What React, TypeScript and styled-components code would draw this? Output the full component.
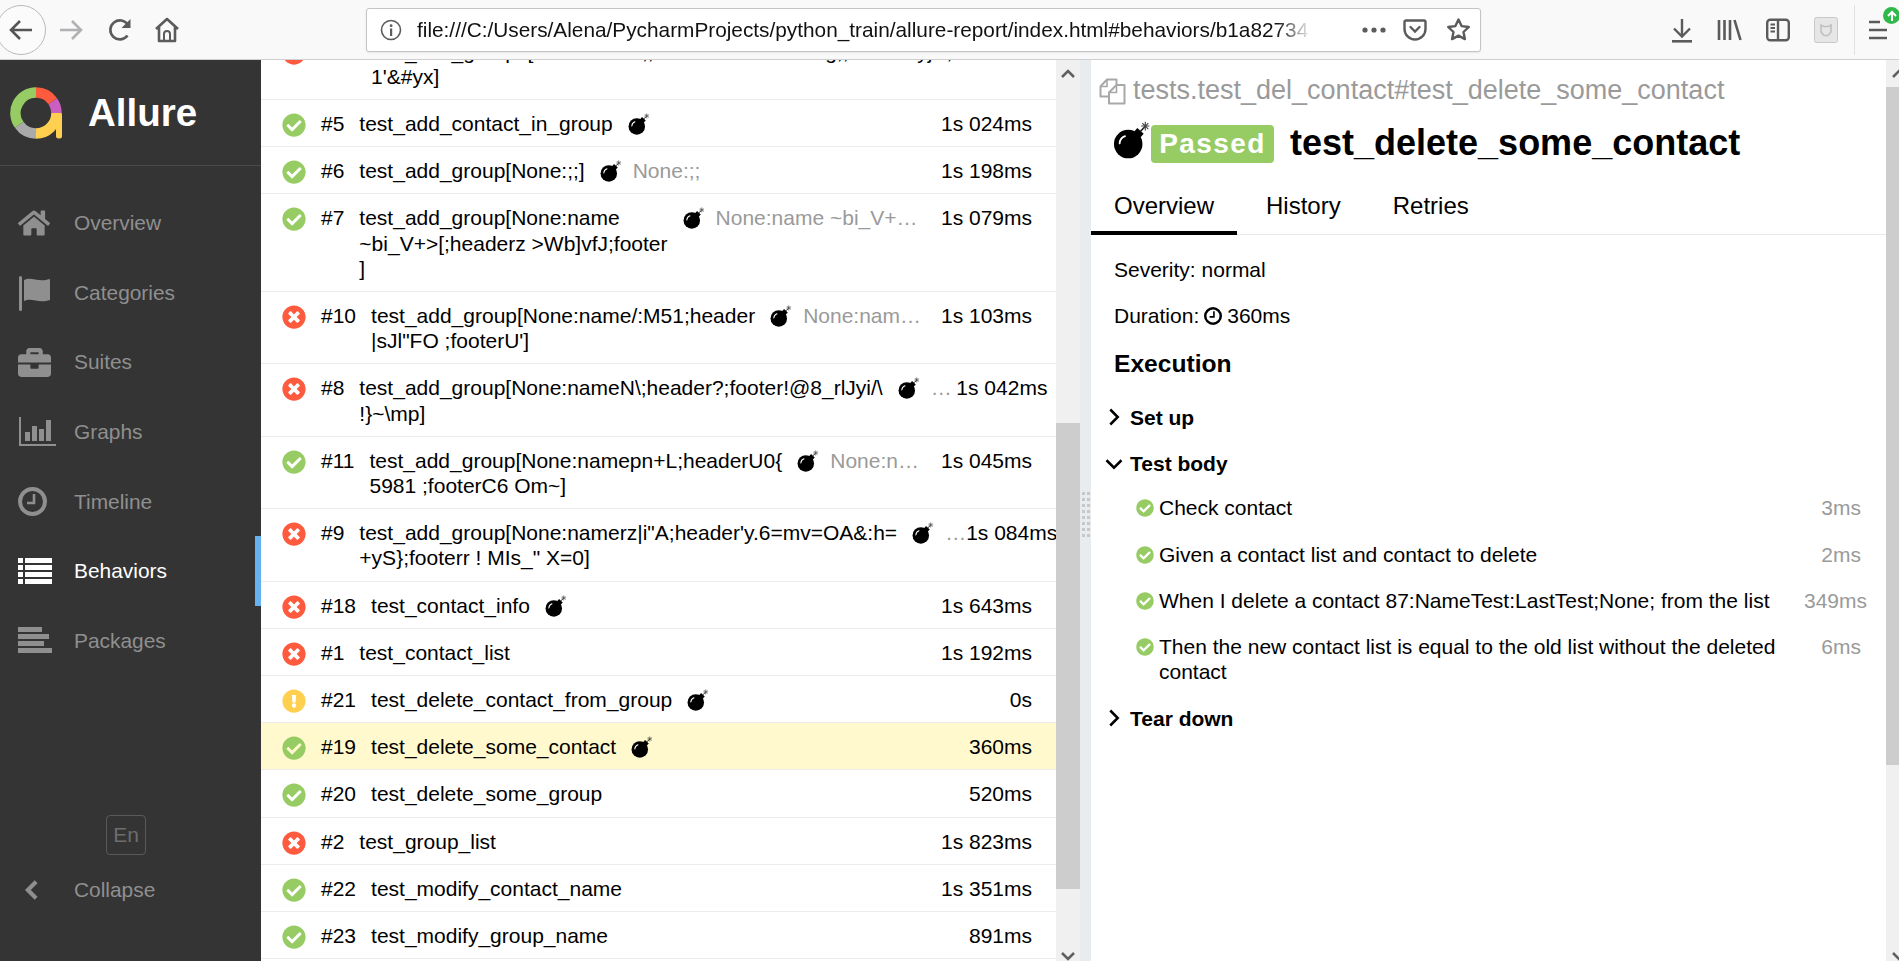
import React from 'react';
import styled, { createGlobalStyle } from 'styled-components';
import { FaHome, FaBriefcase, FaCheckCircle, FaTimesCircle, FaExclamationCircle } from 'react-icons/fa';

const Global = createGlobalStyle`
  html, body { margin: 0; padding: 0; background: #fff; overflow: hidden; }
  * { box-sizing: border-box; }
  body { font-family: "Liberation Sans", Arial, sans-serif; color: #000; }
`;

const Page = styled.div`
  width: 1899px; height: 961px; display: flex; flex-direction: column; overflow: hidden;
`;

/* ---------- browser toolbar ---------- */
const Toolbar = styled.header`
  height: 60px; flex: none; display: flex; align-items: center;
  background: #f9f9fa; border-bottom: 1px solid #cfcfd1;
`;
const ToolButton = styled.div<{ $w: number }>`
  width: ${p => p.$w}px; height: 100%; flex: none;
  display: flex; align-items: center; justify-content: center; color: #5b5b5c;
`;
const BackButton = styled.div`
  width: 50px; height: 50px; flex: none; margin-left: -4px; border-radius: 50%;
  border: 1px solid #b9b9bb; background: #fbfbfb; color: #555;
  display: flex; align-items: center; justify-content: center;
`;
const UrlBar = styled.div`
  margin-left: 176px; width: 1115px; height: 44px; flex: none; display: flex; align-items: center;
  background: #fff; border: 1px solid #c4c4c6; border-radius: 3px; box-shadow: 0 1px 2px rgba(0,0,0,.08);
  padding-left: 13px; color: #5b5b5c;
`;
const UrlText = styled.div`
  margin-left: 15px; width: 895px; flex: none; overflow: hidden; white-space: nowrap;
  font-size: 20.8px; color: #111;
  -webkit-mask-image: linear-gradient(to right, #000 96%, transparent 100%);
  mask-image: linear-gradient(to right, #000 96%, transparent 100%);
`;
const UrlActions = styled.div`
  margin-left: auto; display: flex; align-items: center; height: 100%;
`;
const ToolSpacer = styled.div`flex: 1;`;
const ToolDivider = styled.div`
  width: 1px; height: 50px; background: #e1e1e2; margin: 0 14px 0 4px; flex: none;
`;
const MenuButton = styled.div`
  position: relative; width: 30px; height: 100%; flex: none; color: #5b5b5c;
  display: flex; align-items: center;
`;
const UpdateBadge = styled.div`
  position: absolute; left: 14px; top: 7px; width: 17px; height: 17px; border-radius: 50%;
  background: #30b94a; color: #fff; display: flex; align-items: center; justify-content: center;
`;

/* ---------- layout ---------- */
const Main = styled.div`flex: 1; min-height: 0; display: flex;`;

/* ---------- sidebar ---------- */
const Sidebar = styled.aside`
  width: 261px; flex: none; background: #343434; display: flex; flex-direction: column;
`;
const Brand = styled.div`
  height: 106px; flex: none; border-bottom: 1px solid #4b4b4b; display: flex; align-items: center;
  padding: 0 0 0 10px; gap: 26px;
`;
const BrandName = styled.div`font-size: 38.5px; font-weight: 700; color: #fff;`;
const Nav = styled.nav`padding-top: 22px;`;
const NavItem = styled.div<{ $active?: boolean }>`
  height: 69.7px; display: flex; align-items: center; padding-left: 18px;
  font-size: 20.9px; color: ${p => (p.$active ? '#fff' : '#8f8f8f')};
  border-right: 6px solid ${p => (p.$active ? '#66b2f0' : 'transparent')};
`;
const NavIcon = styled.div`width: 56px; flex: none; display: flex; align-items: center;`;
const SideFooter = styled.div`
  margin-top: auto; padding-bottom: 36px; display: flex; flex-direction: column;
`;
const LangButton = styled.div`
  align-self: flex-start; margin-left: 106px; width: 40px; height: 40px; border: 1px solid #5a5a5a;
  border-radius: 4px; color: #6d6d6d; font-size: 21px;
  display: flex; align-items: center; justify-content: center;
`;
const CollapseArrow = styled.span`margin-left: 3px; color: #8f8f8f;`;

/* ---------- list ---------- */
const ListPane = styled.section`flex: 1; min-width: 0; overflow: hidden;`;
const List = styled.div`margin-top: -32.4px;`;
const Row = styled.div<{ $selected?: boolean }>`
  display: flex; align-items: flex-start; padding: 11px 0 10px 21px;
  border-bottom: 1px solid #ececec; font-size: 21px; line-height: 25.2px;
  background: ${p => (p.$selected ? '#fff9cd' : '#fff')};
`;
const StatusIcon = styled.div<{ $c: string }>`
  width: 24px; height: 24px; flex: none; margin: 2px 0 -1px; color: ${p => p.$c};
  & > svg { display: block; width: 24px; height: 24px; }
`;
const RowId = styled.div`margin-left: 15px; margin-right: 15px; flex: none; white-space: nowrap;`;
const RowName = styled.div`flex: none; white-space: pre;`;
const BombSlot = styled.div`margin-left: 15px; flex: none; margin-top: 2px; height: 22px;`;
const RowParam = styled.div`
  flex: 1 1 0; min-width: 21px; margin-left: 11px; color: #9a9a9a;
  white-space: nowrap; overflow: hidden; text-overflow: ellipsis;
`;
const ParamGap = styled.div`flex: 0 1 13px; min-width: 0;`;
const RowTime = styled.div`flex: none; white-space: nowrap;`;
const EndGap = styled.div`flex: 0 1 24px; min-width: 0;`;

/* ---------- scrollbars ---------- */
const Track = styled.div<{ $w: number }>`
  position: relative; width: ${p => p.$w}px; flex: none; background: #f0f0f0; overflow: hidden;
`;
const Thumb = styled.div<{ $top: number; $h: number }>`
  position: absolute; left: 0; right: 0; top: ${p => p.$top}px; height: ${p => p.$h}px; background: #cdcdcd;
`;
const TrackArrow = styled.div<{ $bottom?: boolean }>`
  position: absolute; left: 0; right: 0; ${p => (p.$bottom ? 'bottom: -3px;' : 'top: 6px;')}
  display: flex; justify-content: center; color: #606060;
`;
const ClippedArrow = styled(TrackArrow)`
  justify-content: flex-start; left: 5px; right: auto;
`;
const Splitter = styled.div`
  width: 11px; flex: none; background: #e9ecef; display: flex; flex-direction: column;
  align-items: center; justify-content: center; padding-top: 10px;
`;
const SplitDots = styled.div`
  width: 8px; height: 48px;
  background: repeating-linear-gradient(to right, #c8c8c8 0 3px, transparent 3px 5px);
  -webkit-mask-image: repeating-linear-gradient(to bottom, #000 0 3px, transparent 3px 6px);
  mask-image: repeating-linear-gradient(to bottom, #000 0 3px, transparent 3px 6px);
`;

/* ---------- details ---------- */
const Details = styled.section`flex: 1; min-width: 0; display: flex; flex-direction: column;`;
const PathLine = styled.div`
  display: flex; align-items: center; padding: 14px 0 0 8px; height: 47px; gap: 7px;
  font-size: 27px; color: #9a9a9a; white-space: nowrap;
`;
const TitleLine = styled.div`
  display: flex; align-items: center; height: 58px; padding-left: 22px; margin-top: 7px;
`;
const BigBomb = styled.div`flex: none; margin-bottom: 6px;`;
const Badge = styled.div`
  height: 38px; width: 123px; margin-top: 1px; border-radius: 4px; background: #97cc64; color: #fff;
  font-size: 28px; font-weight: 700; letter-spacing: 1.4px;
  display: flex; align-items: center; justify-content: center;
`;
const Title = styled.h1`margin: 0 0 0 16px; font-size: 36px; font-weight: 700; white-space: nowrap;`;
const Tabs = styled.div`
  display: flex; height: 49px; margin-top: 14px; gap: 6px; border-bottom: 1px solid #e8e8e8;
  font-size: 24px;
`;
const Tab = styled.div<{ $active?: boolean }>`
  height: 49px; padding: 0 23px 5px; display: flex; align-items: center;
  border-bottom: 4px solid ${p => (p.$active ? '#000' : 'transparent')};
`;
const Body = styled.div`
  padding: 12px 25px 0 23px; font-size: 21px; line-height: 25.2px;
`;
const Meta = styled.div`
  height: 46px; display: flex; align-items: center; gap: 5px;
`;
const SectionTitle = styled.h2`
  margin: 0 0 5px; height: 50px; display: flex; align-items: center; font-size: 24.6px; font-weight: 700;
`;
const Stage = styled.div`
  height: 46.4px; display: flex; align-items: center; font-weight: 700; margin-left: -10px;
`;
const StageIcon = styled.div`width: 26px; flex: none; display: flex; justify-content: flex-start;`;
const Steps = styled.div`margin-top: -2px;`;
const Step = styled.div`
  display: flex; align-items: flex-start; padding: 10.5px 0 10.6px 22px;
`;
const StepIcon = styled.div`
  width: 23px; flex: none; margin-top: 4px; color: #97cc64;
  & > svg { display: block; width: 18px; height: 18px; }
`;
const StepText = styled.div`width: 645px; flex: none;`;
const StepTime = styled.div`margin-left: auto; color: #9a9a9a; white-space: nowrap;`;

/* ---------- drawings ---------- */
const Bomb = ({ s = 22 }: { s?: number }) => (
  <svg width={s} height={s} viewBox="0 0 24 24" style={{ display: 'block' }}>
    <circle cx="9.6" cy="14.6" r="9" fill="#000" />
    <rect x="13" y="5.6" width="5.4" height="5" fill="#000" transform="rotate(42 15.7 8.1)" />
    <path d="M17.4 6.4 L20 3.8" stroke="#000" strokeWidth=".9" fill="none" />
    <path d="M20.4 .4v5.6M17.8 3.2h5.2M18.5 1.3l3.8 3.8M22.3 1.3l-3.8 3.8" stroke="#444" strokeWidth=".7" fill="none" />
    <path d="M4.2 14.2c.1-2.4 1.6-4 3.4-4.6" stroke="#fff" strokeWidth="1.1" fill="none" strokeLinecap="round" />
  </svg>
);

const Logo = () => (
  <svg width="52" height="52" viewBox="0 0 52 52" style={{ display: 'block', flex: 'none' }} fill="none" strokeWidth="10.5">
    <rect x="46" y="26" width="6" height="25.500" rx="2.500" fill="#ffd050" />
    <path d="M26 5.500A20.500 20.500 0 0 1 42.800 14.200" stroke="#fd5a3e" />
    <path d="M42.800 14.200A20.500 20.500 0 0 1 46.500 26" stroke="#c95fc0" />
    <path d="M46.500 26A20.500 20.500 0 0 1 26 46.500" stroke="#ffd050" />
    <path d="M26 46.500A20.500 20.500 0 0 1 9.200 37.800" stroke="#aaaaaa" />
    <path d="M9.200 37.800A20.500 20.500 0 0 1 26 5.500" stroke="#97cc64" />
  </svg>
);

const Svg = ({ w, h, children, vb }: { w: number; h: number; vb?: string; children: React.ReactNode }) => (
  <svg width={w} height={h} viewBox={vb ?? `0 0 ${w} ${h}`} style={{ display: 'block' }}>{children}</svg>
);

const FlagIcon = () => (
  <Svg w={34} h={36}>
    <rect x="1" y="1" width="3" height="35" rx="1.500" fill="#8f8f8f" />
    <path d="M6 5c8-4 13 3 26-1v21c-12 4-18-3-26 1z" fill="#8f8f8f" />
  </Svg>
);
const ChartIcon = () => (
  <Svg w={38} h={30}>
    <path d="M1 0h2v27h35v2H1z" fill="#8f8f8f" />
    <rect x="7" y="15" width="5" height="9" fill="#8f8f8f" />
    <rect x="14" y="9" width="5" height="15" fill="#8f8f8f" />
    <rect x="21" y="12" width="5" height="12" fill="#8f8f8f" />
    <rect x="28" y="3" width="5" height="21" fill="#8f8f8f" />
  </Svg>
);
const ClockIcon = ({ s = 29, c = '#8f8f8f' }: { s?: number; c?: string }) => (
  <Svg w={s} h={s} vb="0 0 29 29">
    <circle cx="14.500" cy="14.500" r="12.500" fill="none" stroke={c} strokeWidth="4" />
    <path d="M16 7v9H9" fill="none" stroke={c} strokeWidth="2.600" />
  </Svg>
);
const ListIcon = () => (
  <Svg w={34} h={26}>
    {[0, 7, 14, 21].map(y => (
      <React.Fragment key={y}>
        <rect x="0" y={y} width="5" height="5" fill="#fff" />
        <rect x="7" y={y} width="27" height="5" fill="#fff" />
      </React.Fragment>
    ))}
  </Svg>
);
const PackagesIcon = () => (
  <Svg w={34} h={27}>
    <rect x="0" y="0" width="24" height="5" fill="#8f8f8f" />
    <rect x="0" y="7" width="31" height="5" fill="#8f8f8f" />
    <rect x="0" y="14" width="26" height="5" fill="#8f8f8f" />
    <rect x="0" y="21" width="34" height="5" fill="#8f8f8f" />
  </Svg>
);
const Chevron = ({ d, w = 2, s = 16 }: { d: 'up' | 'down' | 'left' | 'right'; w?: number; s?: number }) => {
  const pts = {
    up: '2,11 8,5 14,11', down: '2,5 8,11 14,5', left: '11,2 5,8 11,14', right: '5,2 11,8 5,14',
  }[d];
  return (
    <svg width={s} height={s} viewBox="0 0 16 16" style={{ display: 'block' }}>
      <polyline points={pts} fill="none" stroke="currentColor" strokeWidth={w} />
    </svg>
  );
};
const BackArrow = ({ c }: { c: string }) => (
  <svg width="26" height="26" viewBox="0 0 26 26" style={{ display: 'block' }}>
    <path d="M24 13H3M12 4l-9 9 9 9" fill="none" stroke={c} strokeWidth="2.600" />
  </svg>
);
const ForwardArrow = () => (
  <svg width="26" height="26" viewBox="0 0 26 26" style={{ display: 'block' }}>
    <path d="M2 13h21M14 4l9 9-9 9" fill="none" stroke="#b1b1b3" strokeWidth="2.600" />
  </svg>
);
const ReloadIcon = () => (
  <svg width="26" height="26" viewBox="0 0 26 26" style={{ display: 'block' }}>
    <path d="M20.500 18.500A9.500 9.500 0 1 1 21 8" fill="none" stroke="currentColor" strokeWidth="2.600" />
    <path d="M23.500 2v9h-9z" fill="currentColor" />
  </svg>
);
const HomeIcon = () => (
  <svg width="26" height="28" viewBox="0 0 26 28" style={{ display: 'block' }}>
    <path d="M2 13L13 3l11 10M5 11v14h16V11" fill="none" stroke="currentColor" strokeWidth="2.600" strokeLinejoin="round" />
    <path d="M10 25v-7a3 3 0 0 1 6 0v7" fill="none" stroke="currentColor" strokeWidth="2" />
  </svg>
);
const InfoIcon = () => (
  <svg width="22" height="22" viewBox="0 0 22 22" style={{ display: 'block' }}>
    <circle cx="11" cy="11" r="9.500" fill="none" stroke="currentColor" strokeWidth="1.600" />
    <rect x="10" y="9.500" width="2.200" height="7.500" fill="currentColor" />
    <circle cx="11.100" cy="6.700" r="1.400" fill="currentColor" />
  </svg>
);
const PocketIcon = () => (
  <svg width="24" height="24" viewBox="0 0 24 24" style={{ display: 'block' }}>
    <path d="M3 2.500h18a1.500 1.500 0 0 1 1.500 1.500v7a10.500 10.500 0 0 1-21 0V4A1.500 1.500 0 0 1 3 2.500z" fill="none" stroke="currentColor" strokeWidth="2.400" />
    <path d="M7.500 9l4.500 4.500L16.500 9" fill="none" stroke="currentColor" strokeWidth="2.400" strokeLinecap="round" />
  </svg>
);
const StarIcon = () => (
  <svg width="25" height="25" viewBox="0 0 25 25" style={{ display: 'block' }}>
    <path d="M12.500 2.500l3.100 6.600 7.200.9-5.300 5 1.400 7.100-6.400-3.500-6.400 3.500 1.400-7.100-5.300-5 7.200-.9z" fill="none" stroke="currentColor" strokeWidth="2.400" strokeLinejoin="round" />
  </svg>
);
const DownloadIcon = () => (
  <svg width="24" height="26" viewBox="0 0 24 26" style={{ display: 'block' }}>
    <path d="M12 2v17M4 11.500l8 8 8-8" fill="none" stroke="currentColor" strokeWidth="2.400" />
    <rect x="2" y="23" width="20" height="2.600" fill="currentColor" />
  </svg>
);
const LibraryIcon = () => (
  <svg width="26" height="24" viewBox="0 0 26 24" style={{ display: 'block' }}>
    <path d="M2 2v20M7.500 2v20M13 2v20M17.500 2l6 20" fill="none" stroke="currentColor" strokeWidth="2.600" />
  </svg>
);
const SidebarIcon = () => (
  <svg width="24" height="24" viewBox="0 0 24 24" style={{ display: 'block' }}>
    <rect x="1.200" y="1.700" width="21.600" height="20.600" rx="3" fill="none" stroke="currentColor" strokeWidth="2.400" />
    <path d="M12 2v20" stroke="currentColor" strokeWidth="2.400" />
    <path d="M4.500 6.500h4.500M4.500 10h4.500M4.500 13.500h4.500" stroke="currentColor" strokeWidth="1.800" />
  </svg>
);
const ExtIcon = () => (
  <svg width="24" height="26" viewBox="0 0 24 26" style={{ display: 'block' }}>
    <rect x=".5" y=".5" width="23" height="25" rx="2" fill="#e6e6e7" stroke="#c9c9cb" />
    <path d="M7 8l2.500 1.500h5L17 8v7l-3 3.500h-4L7 15z" fill="none" stroke="#c0c0c2" strokeWidth="1.600" />
  </svg>
);
const HamburgerIcon = () => (
  <svg width="20" height="24" viewBox="0 0 20 24" style={{ display: 'block' }}>
    <path d="M0 4h11M0 12h18M0 20h18" stroke="currentColor" strokeWidth="2.600" fill="none" />
  </svg>
);
const CopyIcon = () => (
  <svg width="27" height="28" viewBox="0 0 27 28" style={{ display: 'block', flex: 'none' }}>
    <path d="M9.500 19.500H1.500V9.500L8 2.500h9.500V8" fill="none" stroke="#a8a8a8" strokeWidth="2" strokeLinejoin="round" />
    <path d="M1.500 9.500H8V2.500" fill="none" stroke="#a8a8a8" strokeWidth="1.600" />
    <path d="M17.500 8h8v18.500H10V15.500z" fill="#fff" stroke="#a8a8a8" strokeWidth="2" strokeLinejoin="round" />
    <path d="M10 15.500h7.500V8" fill="none" stroke="#a8a8a8" strokeWidth="1.600" />
  </svg>
);

type Status = 'ok' | 'fail' | 'warn';
const statusColor: Record<Status, string> = { ok: '#97cc64', fail: '#fd5a3e', warn: '#ffd050' };
const statusGlyph: Record<Status, React.ReactNode> = {
  ok: <FaCheckCircle />, fail: <FaTimesCircle />, warn: <FaExclamationCircle />,
};

interface RowData { st: Status; id: string; name: string; bomb?: boolean; param?: string; time: string; sel?: boolean; }

const rows: RowData[] = [
  { st: 'fail', id: '#14', name: "test_add_groups[None:name,;headerM0UoNWRg,;footerUyjK,\n1'&#yx]", bomb: false, time: '' },
  { st: 'ok', id: '#5', name: 'test_add_contact_in_group', bomb: true, time: '1s 024ms' },
  { st: 'ok', id: '#6', name: 'test_add_group[None:;;]', bomb: true, param: 'None:;;', time: '1s 198ms' },
  { st: 'ok', id: '#7', name: 'test_add_group[None:name\n~bi_V+>[;headerz >Wb]vfJ;footer\n]', bomb: true, param: 'None:name ~bi_V+>[;headerz >Wb]vfJ;footer ]', time: '1s 079ms' },
  { st: 'fail', id: '#10', name: 'test_add_group[None:name/:M51;header\n|sJl"FO ;footerU\']', bomb: true, param: 'None:name/:M51;header |sJl"FO ;footerU\'', time: '1s 103ms' },
  { st: 'fail', id: '#8', name: 'test_add_group[None:nameN\\;header?;footer!@8_rlJyi/\\\n!}~\\mp]', bomb: true, param: '…', time: '1s 042ms' },
  { st: 'ok', id: '#11', name: 'test_add_group[None:namepn+L;headerU0{\n5981 ;footerC6 Om~]', bomb: true, param: 'None:namepn+L;headerU0{ 5981', time: '1s 045ms' },
  { st: 'fail', id: '#9', name: 'test_add_group[None:namerz|i"A;header\'y.6=mv=OA&:h=\n+yS};footerr ! MIs_" X=0]', bomb: true, param: '…', time: '1s 084ms' },
  { st: 'fail', id: '#18', name: 'test_contact_info', bomb: true, time: '1s 643ms' },
  { st: 'fail', id: '#1', name: 'test_contact_list', time: '1s 192ms' },
  { st: 'warn', id: '#21', name: 'test_delete_contact_from_group', bomb: true, time: '0s' },
  { st: 'ok', id: '#19', name: 'test_delete_some_contact', bomb: true, time: '360ms', sel: true },
  { st: 'ok', id: '#20', name: 'test_delete_some_group', time: '520ms' },
  { st: 'fail', id: '#2', name: 'test_group_list', time: '1s 823ms' },
  { st: 'ok', id: '#22', name: 'test_modify_contact_name', time: '1s 351ms' },
  { st: 'ok', id: '#23', name: 'test_modify_group_name', time: '891ms' },
];

const steps = [
  { t: 'Check contact', d: '3ms' },
  { t: 'Given a contact list and contact to delete', d: '2ms' },
  { t: 'When I delete a contact 87:NameTest:LastTest;None; from the list', d: '349ms' },
  { t: 'Then the new contact list is equal to the old list without the deleted contact', d: '6ms' },
];

const navItems: { label: string; icon: React.ReactNode; active?: boolean }[] = [
  { label: 'Overview', icon: <FaHome size={32} color="#8f8f8f" /> },
  { label: 'Categories', icon: <FlagIcon /> },
  { label: 'Suites', icon: <FaBriefcase size={33} color="#8f8f8f" /> },
  { label: 'Graphs', icon: <ChartIcon /> },
  { label: 'Timeline', icon: <ClockIcon /> },
  { label: 'Behaviors', icon: <ListIcon />, active: true },
  { label: 'Packages', icon: <PackagesIcon /> },
];

export default function App() {
  return (
    <Page>
      <Global />
      <Toolbar>
        <BackButton><BackArrow c="#555" /></BackButton>
        <ToolButton $w={50}><ForwardArrow /></ToolButton>
        <ToolButton $w={48}><ReloadIcon /></ToolButton>
        <ToolButton $w={46}><HomeIcon /></ToolButton>
        <UrlBar>
          <InfoIcon />
          <UrlText>file:///C:/Users/Alena/PycharmProjects/python_train/allure-report/index.html#behaviors/b1a82734</UrlText>
          <UrlActions>
            <ToolButton $w={40}>
              <svg width="24" height="6" viewBox="0 0 24 6"><circle cx="3" cy="3" r="2.600" fill="currentColor" /><circle cx="12" cy="3" r="2.600" fill="currentColor" /><circle cx="21" cy="3" r="2.600" fill="currentColor" /></svg>
            </ToolButton>
            <ToolButton $w={42}><PocketIcon /></ToolButton>
            <ToolButton $w={44}><StarIcon /></ToolButton>
          </UrlActions>
        </UrlBar>
        <ToolSpacer />
        <ToolButton $w={48}><DownloadIcon /></ToolButton>
        <ToolButton $w={48}><LibraryIcon /></ToolButton>
        <ToolButton $w={48}><SidebarIcon /></ToolButton>
        <ToolButton $w={48}><ExtIcon /></ToolButton>
        <ToolDivider />
        <MenuButton>
          <HamburgerIcon />
          <UpdateBadge>
            <svg width="12" height="12" viewBox="0 0 12 12"><path d="M6 11V2M2 6l4-4 4 4" fill="none" stroke="#fff" strokeWidth="2" /></svg>
          </UpdateBadge>
        </MenuButton>
      </Toolbar>
      <Main>
        <Sidebar>
          <Brand><Logo /><BrandName>Allure</BrandName></Brand>
          <Nav>
            {navItems.map(n => (
              <NavItem key={n.label} $active={n.active}>
                <NavIcon>{n.icon}</NavIcon>
                {n.label}
              </NavItem>
            ))}
          </Nav>
          <SideFooter>
            <LangButton>En</LangButton>
            <NavItem>
              <NavIcon><CollapseArrow><Chevron d="left" w={3} s={22} /></CollapseArrow></NavIcon>
              Collapse
            </NavItem>
          </SideFooter>
        </Sidebar>
        <ListPane>
          <List>
            {rows.map(r => (
              <Row key={r.id} $selected={r.sel}>
                <StatusIcon $c={statusColor[r.st]}>{statusGlyph[r.st]}</StatusIcon>
                <RowId>{r.id}</RowId>
                <RowName>{r.name}</RowName>
                {r.bomb && <BombSlot><Bomb /></BombSlot>}
                <RowParam>{r.param}</RowParam>
                <ParamGap />
                <RowTime>{r.time}</RowTime>
                <EndGap />
              </Row>
            ))}
          </List>
        </ListPane>
        <Track $w={24}>
          <Thumb $top={363} $h={466} />
          <TrackArrow><Chevron d="up" w={2.6} /></TrackArrow>
          <TrackArrow $bottom><Chevron d="down" w={2.6} /></TrackArrow>
        </Track>
        <Splitter><SplitDots /></Splitter>
        <Details>
          <PathLine><CopyIcon />tests.test_del_contact#test_delete_some_contact</PathLine>
          <TitleLine>
            <BigBomb><Bomb s={38} /></BigBomb>
            <Badge>Passed</Badge>
            <Title>test_delete_some_contact</Title>
          </TitleLine>
          <Tabs>
            <Tab $active>Overview</Tab>
            <Tab>History</Tab>
            <Tab>Retries</Tab>
          </Tabs>
          <Body>
            <Meta>Severity: normal</Meta>
            <Meta>Duration: <ClockIcon s={18} c="#000" /> 360ms</Meta>
            <SectionTitle>Execution</SectionTitle>
            <Stage><StageIcon><Chevron d="right" s={20} /></StageIcon>Set up</Stage>
            <Stage><StageIcon><Chevron d="down" s={20} /></StageIcon>Test body</Stage>
            <Steps>
              {steps.map(s => (
                <Step key={s.t}>
                  <StepIcon><FaCheckCircle /></StepIcon>
                  <StepText>{s.t}</StepText>
                  <StepTime>{s.d}</StepTime>
                </Step>
              ))}
            </Steps>
            <Stage><StageIcon><Chevron d="right" s={20} /></StageIcon>Tear down</Stage>
          </Body>
        </Details>
        <Track $w={13}>
          <Thumb $top={27} $h={678} />
          <ClippedArrow><Chevron d="up" w={2.6} /></ClippedArrow>
          <ClippedArrow $bottom><Chevron d="down" w={2.6} /></ClippedArrow>
        </Track>
      </Main>
    </Page>
  );
}
